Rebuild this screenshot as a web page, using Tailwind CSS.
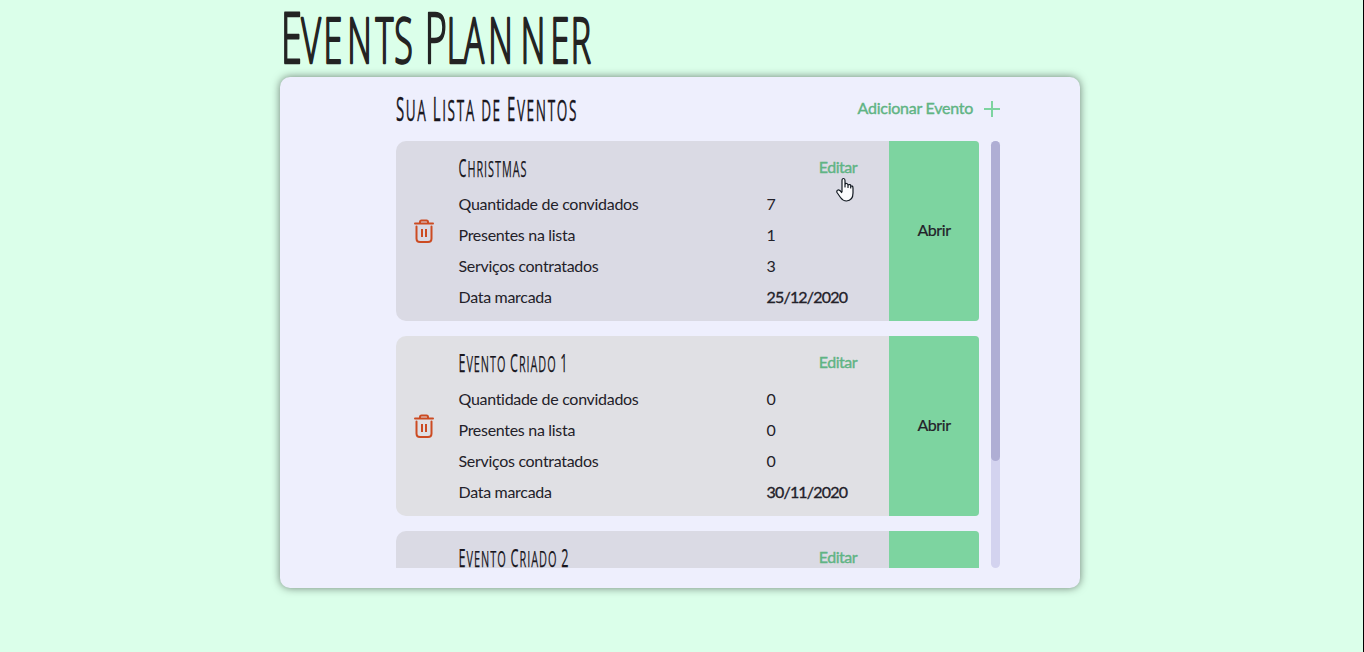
<!DOCTYPE html>
<html lang="pt-BR">
<head>
<meta charset="utf-8">
<title>Events Planner</title>
<script src="https://cdn.jsdelivr.net/npm/@tailwindcss/browser@4"></script>
</head>
<body class="h-[652px] overflow-hidden border-r border-black bg-[#dbffea] font-['Lato',sans-serif] text-base tracking-[-0.3px] text-[#232129]">
<svg class="hidden">
  <symbol id="trash" viewBox="0 0 20 26"><g fill="none" stroke="#cc4b22" stroke-width="2" stroke-linecap="round" stroke-linejoin="round"><path d="M1 5.500H19"/><path d="M6 5V4Q6 2.500 7.500 2.500H12.500Q14 2.500 14 4V5"/><path d="M2.500 8.500V20.500Q2.500 24 6 24H14Q17.500 24 17.500 20.500V8.500"/><path stroke-linecap="butt" d="M8 11V19M12 11V19"/></g></symbol>
</svg>
<main class="ml-[280px] w-[800px]">
  <h1 class="h-[77px]">
    <svg class="block h-[77px] w-[330px] overflow-visible font-['Open_Sans',sans-serif] font-light tracking-normal" fill="#232323" stroke="#232323" stroke-width="2.4" stroke-linejoin="round"><text transform="scale(.54 1)" y="63" font-size="63" text-anchor="middle" x="21 57.400 98.100 147.200 193.500 228.700 260 288.500 325 359.300 408.300 468.500 518.400 557"><tspan font-size="70">E</tspan>VENTS <tspan font-size="70">P</tspan>LANNER</text></svg>
  </h1>
  <section class="h-[511px] rounded-[10px] bg-[#eeeffd] pr-20 pl-[116px] shadow-[0_0_8px_rgba(0,0,0,0.5)]">
    <header class="flex h-16 w-[604px] items-center justify-between">
      <h2><svg class="block h-16 w-[190px] overflow-visible font-['Open_Sans',sans-serif]" fill="#18161d" stroke="#18161d" stroke-width=".4" stroke-linejoin="round"><text x="0" y="43.500" font-size="29" textLength="182" lengthAdjust="spacingAndGlyphs" letter-spacing="3.5"><tspan font-size="32">S</tspan>UA <tspan font-size="32">L</tspan>ISTA DE <tspan font-size="32">E</tspan>VENTOS</text></svg></h2>
      <button class="flex items-center gap-[10px] text-[#60b484] [-webkit-text-stroke:0.4px_#60b484]"><span class="relative -top-px tracking-[-0.25px]">Adicionar Evento</span><svg class="size-[17px]" viewBox="0 0 17 17"><path d="M9 0V16M1 8H17" stroke="#7dd4a0" stroke-width="2"/></svg></button>
    </header>
    <div class="flex h-[427px] w-[604px] justify-between">
      <div class="flex w-[583px] flex-col gap-[15px] overflow-hidden">
        <article class="flex h-[180px] shrink-0 overflow-hidden rounded-l-[10px] rounded-r bg-[#dadae4]">
          <div class="flex w-[56px] items-center justify-center"><svg class="h-[26px] w-5"><use href="#trash"/></svg></div>
          <div class="w-[437px] pt-[11px] pl-[6.5px]">
            <div class="flex h-9 justify-between pr-8"><h3><svg class="block h-9 w-[120px] overflow-visible font-['Open_Sans',sans-serif]" fill="#18161d" stroke="#18161d" stroke-width=".25"><text x="-.5" y="25" font-size="22.500" textLength="69" lengthAdjust="spacingAndGlyphs" letter-spacing="2"><tspan font-size="26">C</tspan>HRISTMAS</text></svg></h3><button class="h-[30px] text-[#60b484] tracking-[-0.5px] [-webkit-text-stroke:0.4px_#60b484]">Editar</button></div>
            <dl class="grid grid-cols-[308px_1fr] leading-[31px]"><dt>Quantidade de convidados</dt><dd>7</dd><dt>Presentes na lista</dt><dd>1</dd><dt>Serviços contratados</dt><dd>3</dd><dt>Data marcada</dt><dd class="tracking-[-0.8px] [-webkit-text-stroke:0.35px_#232129]">25/12/2020</dd></dl>
          </div>
          <button class="w-[90px] bg-[#7dd4a0] pb-[2px] tracking-[-0.4px] [-webkit-text-stroke:0.2px_#232129]">Abrir</button>
        </article>
        <article class="flex h-[180px] shrink-0 overflow-hidden rounded-l-[10px] rounded-r bg-[#e0e0e4]">
          <div class="flex w-[56px] items-center justify-center"><svg class="h-[26px] w-5"><use href="#trash"/></svg></div>
          <div class="w-[437px] pt-[11px] pl-[6.5px]">
            <div class="flex h-9 justify-between pr-8"><h3><svg class="block h-9 w-[120px] overflow-visible font-['Open_Sans',sans-serif]" fill="#18161d" stroke="#18161d" stroke-width=".25"><text x="-.5" y="25" font-size="22.500" textLength="110" lengthAdjust="spacingAndGlyphs" letter-spacing="2"><tspan font-size="26">E</tspan>VENTO <tspan font-size="26">C</tspan>RIADO <tspan font-size="26">1</tspan></text></svg></h3><button class="h-[30px] text-[#60b484] tracking-[-0.5px] [-webkit-text-stroke:0.4px_#60b484]">Editar</button></div>
            <dl class="grid grid-cols-[308px_1fr] leading-[31px]"><dt>Quantidade de convidados</dt><dd>0</dd><dt>Presentes na lista</dt><dd>0</dd><dt>Serviços contratados</dt><dd>0</dd><dt>Data marcada</dt><dd class="tracking-[-0.8px] [-webkit-text-stroke:0.35px_#232129]">30/11/2020</dd></dl>
          </div>
          <button class="w-[90px] bg-[#7dd4a0] pb-[2px] tracking-[-0.4px] [-webkit-text-stroke:0.2px_#232129]">Abrir</button>
        </article>
        <article class="flex h-[180px] shrink-0 overflow-hidden rounded-l-[10px] rounded-r bg-[#dadae4]">
          <div class="w-[493px] pt-[11px] pl-[62.5px]">
            <div class="flex h-9 justify-between pr-8"><h3><svg class="block h-9 w-[120px] overflow-visible font-['Open_Sans',sans-serif]" fill="#18161d" stroke="#18161d" stroke-width=".25"><text x="-.5" y="25" font-size="22.500" textLength="111" lengthAdjust="spacingAndGlyphs" letter-spacing="2"><tspan font-size="26">E</tspan>VENTO <tspan font-size="26">C</tspan>RIADO <tspan font-size="26">2</tspan></text></svg></h3><button class="h-[30px] text-[#60b484] tracking-[-0.5px] [-webkit-text-stroke:0.4px_#60b484]">Editar</button></div>
          </div>
          <div class="w-[90px] bg-[#7dd4a0]"></div>
        </article>
      </div>
      <div class="w-[9px] rounded-full bg-[#d3d3ef]"><div class="h-80 rounded-full bg-[#afaed4]"></div></div>
    </div>
  </section>
</main>
<svg class="absolute top-[177px] left-[835px] h-[26px] w-[20px]" viewBox="0 0 20 26"><path d="M7 15V3.500Q7 1.500 8.500 1.500T10 3.500V10 7.500Q10.300 6.300 11.500 6.500T13 8V10.500 8.500Q13.500 7.200 14.800 7.600T15.700 9V11 9.500Q17.800 8 18 11V16Q18 23.500 11.500 24Q8 24 5.500 20.500L2 15.500Q1.300 13.500 3 13T7 16" fill="#fafafc" stroke="#111820" stroke-width="1.200" stroke-linejoin="round"/></svg>
</body>
</html>
